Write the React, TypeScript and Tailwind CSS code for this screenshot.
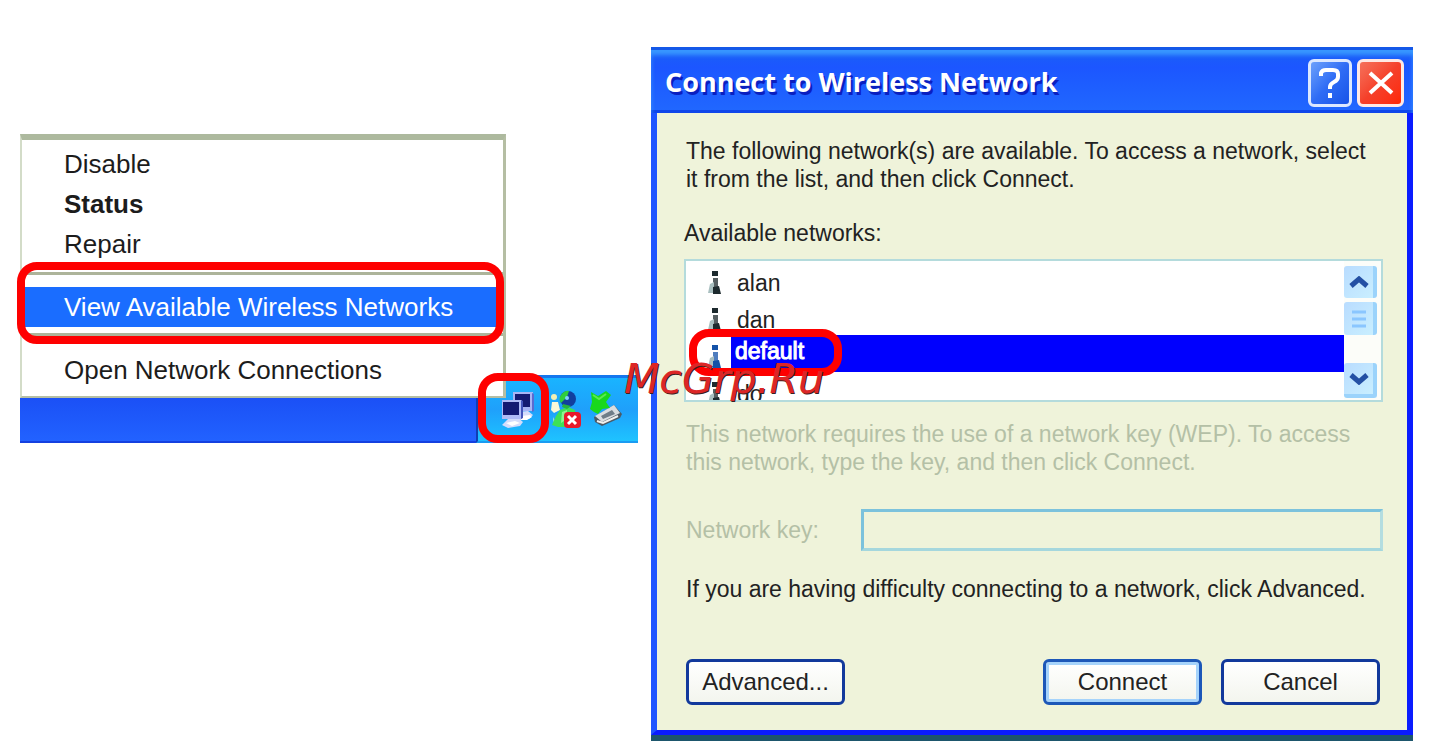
import React from "react";

function Ring({ className }: { className: string }) {
  return <span aria-hidden="true" className={`pointer-events-none absolute z-20 border-8 border-[#fe0000] ${className}`} />;
}

function MenuItem({ label, bold, active }: { label: string; bold?: boolean; active?: boolean }) {
  return (
    <button
      type="button"
      role="menuitem"
      className={`block h-10 w-full pl-[42px] text-left text-[26px] leading-10 whitespace-nowrap ${
        active ? "bg-[#1a6dff] text-white" : "text-[#1c1c1c]"
      } ${bold ? "font-bold" : ""}`}
    >
      {label}
    </button>
  );
}

function ContextMenu() {
  return (
    <div
      role="menu"
      className="relative z-10 mr-[132px] border-t-[6px] border-r-[3px] border-b-2 border-l-2 border-t-[#adb99e] border-r-[#b5bea3] border-b-[#b5bea3] border-l-[#d3dcc8] bg-white pt-1 pb-1.5"
    >
      <MenuItem label="Disable" />
      <MenuItem label="Status" bold />
      <MenuItem label="Repair" />
      <div className="mt-2 mb-3 h-[3px] bg-[#adb49a]" />
      <div className="relative">
        <MenuItem label="View Available Wireless Networks" active />
        <Ring className="-top-[25px] -right-px -bottom-[17px] -left-[5px] rounded-[20px]" />
      </div>
      <div className="mt-1.5 mb-3.5 h-[3px] bg-[#adb49a]" />
      <MenuItem label="Open Network Connections" />
    </div>
  );
}

function ComputersIcon() {
  return (
    <svg viewBox="0 0 36 40" className="h-10 w-9">
      <path d="M15 22l12-1 5 4-4 4-10 1-4-4z" fill="#d4dcfb" />
      <path d="M20 26l9-1 2 2-5 3h-6z" fill="#fff" />
      <path d="M12 2h20v19H12z" fill="#a8b4f4" />
      <path d="M14 4h15v13H14z" fill="#141a72" />
      <path d="M31 3l2 1v17l-2 1z" fill="#5b6bd0" />
      <path d="M8 28l8-1 6 5-3 4-12 2-6-3z" fill="#d4dcfb" />
      <path d="M5 33l9-2 5 2-8 3z" fill="#fff" />
      <path d="M1 10h20v19H1z" fill="#b0bbf6" />
      <path d="M2 12h16v13H2z" fill="#141a72" />
      <path d="M20 10l2 1v17l-2 1z" fill="#4354bb" />
    </svg>
  );
}

function MessengerIcon() {
  return (
    <svg viewBox="0 0 34 40" className="h-10 w-[34px]">
      <circle cx="5" cy="7" r="3" fill="#f1efb4" />
      <path d="M3 12h6l2 8-6 3-3-3z" fill="#fbf8d8" />
      <path d="M4 27l3 6-2 1z" fill="#e8f4c4" />
      <path d="M11 20l8-3 7 3 2 17H9l-6-2 4-9z" fill="#3ee058" />
      <path d="M13 22l5-2v9l-6 4z" fill="#8cf58f" />
      <circle cx="19" cy="9" r="8" fill="#123f9e" />
      <path d="M12 5q4-5 8-4l-2 6-6 6q-3-4 0-8z" fill="#2fce3b" />
      <path d="M14 14l8 2-4 3-5-2z" fill="#25b23f" />
      <circle cx="18" cy="8" r="2" fill="#7fd2ff" />
      <rect x="15" y="22" width="17" height="16" rx="4" fill="#e8182a" />
      <path d="M19 26l8 8m0-8l-8 8" stroke="#fff" strokeWidth="3" />
    </svg>
  );
}

function EjectIcon() {
  return (
    <svg viewBox="0 0 34 40" className="h-10 w-[34px]">
      <path d="M5 27l20-12 8 9-2 4-18 8-7-4z" fill="#4c5a66" />
      <path d="M6 26l19-11 6 8-18 9z" fill="#d9dde0" />
      <path d="M12 26l11-6 3 4-12 5z" fill="#6f7d88" />
      <path d="M8 31l6 2 15-7" stroke="#f1f1ee" strokeWidth="2" fill="none" />
      <path d="M2 2l7 4 8-5 5 4-5 7 4 6-8 1-4 5-4-2-4-3 2-7z" fill="#19d81d" />
      <path d="M4 5l6 4 7-5" stroke="#5bea50" strokeWidth="2" fill="none" />
    </svg>
  );
}

function Taskbar() {
  return (
    <div className="-mt-[23px] flex items-end">
      <div className="h-[45px] flex-1 border-b-2 border-[#1440e0] bg-linear-to-b from-[#1b50f6] to-[#2262ff]" />
      <div className="relative flex h-[68px] w-[162px] items-center border-t-[3px] border-b-2 border-l-2 border-t-[#1577ee] border-b-[#1a9cf2] border-l-[#0f3fb4] bg-linear-to-b from-[#19b4ff] via-[#1fa0fb] to-[#1fc3ff] pl-[23px]">
        <div className="relative z-20 flex shrink-0 items-center">
          <button type="button" aria-label="Network connection" className="mr-3"><ComputersIcon /></button>
          <button type="button" aria-label="Messenger" className="mr-1.5"><MessengerIcon /></button>
          <button type="button" aria-label="Safely remove hardware"><EjectIcon /></button>
        </div>
        <Ring className="-top-[5px] left-0 h-[70px] w-[71px] rounded-[20px]" />
      </div>
    </div>
  );
}

function AccessPointIcon({ color }: { color: string }) {
  return (
    <svg viewBox="0 0 16 26" className="h-[26px] w-4 shrink-0">
      <path d="M6 1h6v5H6z" fill={color} />
      <path d="M7 8h5v9H7z" fill={color} opacity=".75" />
      <path d="M4 14l4-2v11H2z" fill="#a9bfc0" />
      <path d="M7 17l6-1 2 8H7z" fill={color} />
    </svg>
  );
}

function NetworkRow({ name, selected }: { name: string; selected?: boolean }) {
  return (
    <li role="option" aria-selected={!!selected} className="relative flex h-[37px] shrink-0 pl-5">
      <span className="pt-[9px]"><AccessPointIcon color={selected ? "#1452a8" : "#1d2a2e"} /></span>
      <span
        className={
          selected
            ? "ml-[9px] flex-1 bg-[#0000fe] pl-1 text-[23px] leading-8 text-white [-webkit-text-stroke:1px_white]"
            : "ml-[9px] flex-1 pt-1 pl-1.5 text-[23px] leading-9"
        }
      >
        {name}
      </span>
      {selected && <Ring className="-top-1.5 left-[3px] h-[47px] w-[153px] rounded-[20px]" />}
    </li>
  );
}

function Scrollbar() {
  const box = "flex w-[33px] items-center justify-center rounded-[3px] border-r-4 border-[#9bd3fb] bg-linear-to-br from-[#b9dcff] to-[#c9efff]";
  return (
    <div className="flex w-[37px] flex-col bg-[#fcfdf9] pt-[5px] pb-0.5">
      <button type="button" aria-label="Scroll up" className={`h-8 ${box}`}>
        <svg viewBox="0 0 20 12" className="h-3 w-5"><path d="M2 10l8-7 8 7" fill="none" stroke="#2450a4" strokeWidth="5" /></svg>
      </button>
      <div className={`mt-1 h-[33px] ${box}`}>
        <svg viewBox="0 0 16 18" className="h-[18px] w-4"><path d="M1 2h14M1 9h14M1 16h14" stroke="#8ac6ff" strokeWidth="3" /></svg>
      </div>
      <button type="button" aria-label="Scroll down" className={`mt-auto h-[35px] border-b-4 ${box}`}>
        <svg viewBox="0 0 20 12" className="h-3 w-5"><path d="M2 2l8 7 8-7" fill="none" stroke="#2450a4" strokeWidth="5" /></svg>
      </button>
    </div>
  );
}

function DialogButton({ label, primary }: { label: string; primary?: boolean }) {
  return (
    <button
      type="button"
      className={`h-[46px] w-[159px] rounded-md border-[3px] bg-linear-to-b from-white to-[#f3f5ee] text-2xl ${
        primary ? "border-[#1c57b8] shadow-[inset_0_0_0_3px_#a5d3fb]" : "border-[#12399c]"
      }`}
    >
      {label}
    </button>
  );
}

function ConnectDialog() {
  return (
    <section aria-label="Connect to Wireless Network" className="border-b-[6px] border-[#1d566c]">
      <header className="flex h-[66px] items-center justify-between bg-linear-to-b from-[#1a62f4] via-[#1c56ff] via-30% to-[#2168ff] pr-[9px] pl-3.5 shadow-[inset_0_3px_0_#1458e8,inset_0_8px_4px_#3897ff,inset_0_-3px_0_#0f46ea]">
        <h1 className="pt-1 font-['Open_Sans',sans-serif] text-[27px] font-bold text-white [text-shadow:2px_3px_0_#0a1fc0]">
          Connect to Wireless Network
        </h1>
        <div className="flex gap-[5px] pt-1.5">
          <button
            type="button"
            aria-label="Help"
            className="flex h-12 w-11 items-center justify-center rounded-md border-[3px] border-[#dce8ff] bg-linear-to-br from-[#6da0fb] via-[#2f6cf5] to-[#1753e8]"
          >
            <svg viewBox="0 0 24 32" className="h-8 w-6" fill="none" stroke="#fff" strokeWidth="4">
              <path d="M3 9V6q1-3 5-3h7q5 0 5 4v3q0 3-4 5-4 2-4 5v2M12 26v5" />
            </svg>
          </button>
          <button
            type="button"
            aria-label="Close"
            className="flex h-12 w-[47px] items-center justify-center rounded-md border-[3px] border-[#ffe9e4] bg-linear-to-br from-[#f5705a] via-[#f5402a] to-[#ff2600]"
          >
            <svg viewBox="0 0 26 26" className="h-[26px] w-[26px]" fill="none" stroke="#fff" strokeWidth="4">
              <path d="M2 3l22 20M24 3L2 23" />
            </svg>
          </button>
        </div>
      </header>
      <div className="border-r-[6px] border-b-[5px] border-l-[6px] border-r-[#0a1cff] border-b-[#0a1cff] border-l-[#1f55ff] bg-[#eff3da] pt-6 pr-6 pb-[25px] pl-[27px] text-[#222]">
        <p className="pl-0.5 text-[23px] leading-7">
          The following network(s) are available. To access a network, select it from the list, and then click Connect.
        </p>
        <h2 id="networks" className="mt-[26px] text-[23px] leading-7">Available networks:</h2>
        <div className="mt-3 flex h-[143px] border-2 border-[#b4dbdc] bg-white">
          <ul role="listbox" aria-labelledby="networks" className="flex flex-1 flex-col overflow-hidden">
            <NetworkRow name="alan" />
            <NetworkRow name="dan" />
            <NetworkRow name="default" selected />
            <NetworkRow name="do" />
          </ul>
          <Scrollbar />
        </div>
        <p className="mt-[18px] pl-0.5 text-[23px] leading-7 text-[#b4c0a6]">
          This network requires the use of a network key (WEP). To access this network, type the key, and then click Connect.
        </p>
        <div className="mt-[33px] flex items-center pl-0.5">
          <label htmlFor="key" className="w-[175px] shrink-0 text-[23px] text-[#b4c0a6]">Network key:</label>
          <input id="key" type="text" disabled className="h-[42px] min-w-0 flex-1 border-[3px] border-t-[#7cc2dc] border-r-[#b4dde0] border-b-[#a5d7dd] border-l-[#7cc2dc] bg-transparent px-2 text-2xl" />
        </div>
        <p className="mt-6 pl-0.5 text-[23px] leading-7">
          If you are having difficulty connecting to a network, click Advanced.
        </p>
        <div className="mt-14 flex gap-[19px] pr-[3px] pl-0.5">
          <DialogButton label="Advanced..." />
          <span className="flex-1" />
          <DialogButton label="Connect" primary />
          <DialogButton label="Cancel" />
        </div>
      </div>
    </section>
  );
}

export default function App() {
  return (
    <main className="relative min-h-screen bg-white font-['Liberation_Sans',Arial,sans-serif]">
      <div className="grid grid-cols-[618fr_762fr] items-start gap-x-[13px] pt-[47px] pr-[22px] pl-5">
        <div className="pt-[87px]">
          <ContextMenu />
          <Taskbar />
        </div>
        <ConnectDialog />
      </div>
      <div className="pointer-events-none absolute top-[356px] left-[624px] z-30 font-['DejaVu_Sans',sans-serif] text-[41px] leading-[47px] text-[#dc2626] italic [text-shadow:1px_1px_0_#3a2020]">
        McGrp.Ru
      </div>
    </main>
  );
}
